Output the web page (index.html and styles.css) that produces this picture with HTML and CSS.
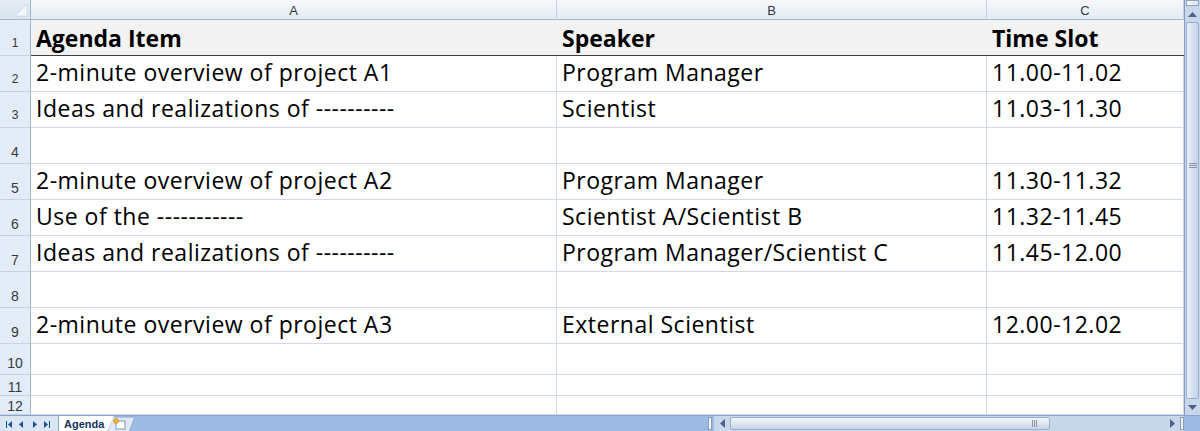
FILE: index.html
```html
<!DOCTYPE html>
<html>
<head>
<meta charset="utf-8">
<link rel="stylesheet" href="styles.css">
</head>
<body>
<div class="app">
  <div class="main">
    <div class="grid">
      <div class="corner">
        <svg width="30" height="19" viewBox="0 0 30 19"><polygon points="27,4 27,16 15,16" fill="#f4f7fb" stroke="#c3d0e2" stroke-width="0.6"/></svg>
      </div>
      <div class="colhead">A</div>
      <div class="colhead">B</div>
      <div class="colhead">C</div>

      <div class="rowhead">1</div>
      <div class="cell title">Agenda Item</div>
      <div class="cell title">Speaker</div>
      <div class="cell title">Time Slot</div>

      <div class="rowhead">2</div>
      <div class="cell">2-minute overview of project A1</div>
      <div class="cell">Program Manager</div>
      <div class="cell">11.00-11.02</div>

      <div class="rowhead">3</div>
      <div class="cell">Ideas and realizations of ----------</div>
      <div class="cell">Scientist</div>
      <div class="cell">11.03-11.30</div>

      <div class="rowhead big">4</div>
      <div class="cell"></div>
      <div class="cell"></div>
      <div class="cell"></div>

      <div class="rowhead big">5</div>
      <div class="cell">2-minute overview of project A2</div>
      <div class="cell">Program Manager</div>
      <div class="cell">11.30-11.32</div>

      <div class="rowhead big">6</div>
      <div class="cell">Use of the -----------</div>
      <div class="cell">Scientist A/Scientist B</div>
      <div class="cell">11.32-11.45</div>

      <div class="rowhead big">7</div>
      <div class="cell">Ideas and realizations of ----------</div>
      <div class="cell">Program Manager/Scientist C</div>
      <div class="cell">11.45-12.00</div>

      <div class="rowhead big">8</div>
      <div class="cell"></div>
      <div class="cell"></div>
      <div class="cell"></div>

      <div class="rowhead big">9</div>
      <div class="cell">2-minute overview of project A3</div>
      <div class="cell">External Scientist</div>
      <div class="cell">12.00-12.02</div>

      <div class="rowhead big">10</div>
      <div class="cell"></div>
      <div class="cell"></div>
      <div class="cell"></div>

      <div class="rowhead big short">11</div>
      <div class="cell"></div>
      <div class="cell"></div>
      <div class="cell"></div>

      <div class="rowhead big short">12</div>
      <div class="cell"></div>
      <div class="cell"></div>
      <div class="cell"></div>
    </div>

    <div class="vscroll">
      <div class="vsplit"></div>
      <div class="vbtn">
        <svg width="9" height="5" viewBox="0 0 9 5"><polygon points="0,5 9,5 4.5,0" fill="#4d6185"/></svg>
      </div>
      <div class="vthumb">
        <div class="vgrip"></div>
      </div>
      <div class="vbtn">
        <svg width="9" height="5" viewBox="0 0 9 5"><polygon points="0,0 9,0 4.5,5" fill="#4d6185"/></svg>
      </div>
    </div>
  </div>

  <div class="tabbar">
    <div class="tabnav">
      <svg width="56" height="14" viewBox="0 0 56 14">
        <g fill="#1e4f96">
          <rect x="6" y="4" width="1" height="7"/>
          <polygon points="12,4 12,11 8,7.5"/>
          <polygon points="23,4 23,11 19,7.5"/>
          <polygon points="33,4 33,11 37,7.5"/>
          <polygon points="44,4 44,11 48,7.5"/>
          <rect x="49" y="4" width="1" height="7"/>
        </g>
      </svg>
    </div>
    <div class="tab">Agenda</div>
    <div class="newtab">
      <svg width="28" height="16" viewBox="0 0 28 16">
        <polygon points="0,16 6,1 28,1 22,16" fill="#dfe8f4" stroke="#8ea8cc" stroke-width="1"/>
        <rect x="9" y="5" width="9" height="8" fill="#fff" stroke="#7f93b4" stroke-width="1"/>
        <circle cx="9" cy="5" r="2.6" fill="#f4b63c" stroke="#d08a1a" stroke-width="0.6"/>
      </svg>
    </div>
    <div class="tabfill"></div>
    <div class="hsplit"></div>
    <div class="hscroll">
      <div class="hbtn">
        <svg width="5" height="9" viewBox="0 0 5 9"><polygon points="5,0 5,9 0,4.5" fill="#4d6185"/></svg>
      </div>
      <div class="hthumb"><div class="hgrip"></div></div>
      <div class="htrack"></div>
      <div class="hbtn">
        <svg width="5" height="9" viewBox="0 0 5 9"><polygon points="0,0 0,9 5,4.5" fill="#4d6185"/></svg>
      </div>
      <div class="hsplit2"></div>
    </div>
    <div class="sizer"></div>
  </div>
</div>
</body>
</html>
```

FILE: styles.css
```css
* {
  box-sizing: border-box;
}

html, body {
  margin: 0;
  padding: 0;
  background: #ffffff;
}

.app {
  width: 1200px;
  height: 431px;
  overflow: hidden;
  display: flex;
  flex-direction: column;
  font-family: "Open Sans", "Lato", sans-serif;
}

.main {
  display: flex;
  height: 415px;
}

/* worksheet grid */
.grid {
  width: 1184px;
  display: grid;
  grid-template-columns: 31px 526px 430px 197px;
  grid-template-rows: 20px 36px repeat(8, 36px) 31px 21px 19px;
  overflow: hidden;
}

.corner {
  background: linear-gradient(#e6edf6, #d9e3ef);
  border-right: 1px solid #9eb6ce;
  border-bottom: 1px solid #9eb6ce;
}

.corner svg {
  display: block;
}

.colhead {
  background: linear-gradient(#f6f9fc, #e4ebf4);
  border-right: 1px solid #c5d2e3;
  border-bottom: 1px solid #9eb6ce;
  font-family: "Liberation Sans", "Arial", sans-serif;
  font-size: 13px;
  color: #333a45;
  display: flex;
  align-items: center;
  justify-content: center;
  padding-top: 1px;
}

.rowhead {
  background: #e4ecf7;
  border-right: 1px solid #9eb6ce;
  border-bottom: 1px solid #c5d2e3;
  font-family: "Liberation Sans", "Arial", sans-serif;
  font-size: 12px;
  color: #333a45;
  display: flex;
  align-items: flex-end;
  justify-content: center;
  padding-bottom: 5px;
}

.rowhead.big {
  font-size: 14px;
  padding-bottom: 3px;
}

.rowhead.short {
  padding-bottom: 0;
}

.cell {
  border-right: 1px solid #d0d7e5;
  border-bottom: 1px solid #d0d7e5;
  font-size: 23px;
  letter-spacing: 0.5px;
  color: #000;
  white-space: nowrap;
  display: flex;
  align-items: flex-end;
  padding: 0 0 5px 5px;
  line-height: 28px;
}

.cell.title {
  font-weight: bold;
  letter-spacing: 0;
  background: #f2f2f2;
  border-right: none;
  border-bottom: 1px solid #3f3f3f;
  padding-bottom: 3px;
}

/* vertical scrollbar */
.vscroll {
  width: 16px;
  display: flex;
  flex-direction: column;
  background: #c9d7ea;
  border-left: 1px solid #7f9bc6;
}

.vsplit {
  height: 6px;
  margin: 0 1px;
  background: linear-gradient(90deg, #f3f6fa, #dfe6ef);
  border: 1px solid #8ea3c1;
}

.vbtn {
  height: 16px;
  display: flex;
  align-items: center;
  justify-content: center;
}

.vthumb {
  flex: 1;
  margin: 0 1px;
  background: linear-gradient(90deg, #e9eff7, #d3dfee 55%, #c3d3e8);
  border: 1px solid #99aed0;
  border-radius: 2px;
  display: flex;
  align-items: center;
  justify-content: center;
  padding-bottom: 90px;
}

.vgrip {
  width: 8px;
  height: 5px;
  border-top: 1px solid #8a95a6;
  border-bottom: 1px solid #8a95a6;
  background: linear-gradient(#8a95a6, #8a95a6) center / 8px 1px no-repeat;
}

/* sheet tabs and horizontal scrollbar */
.tabbar {
  height: 16px;
  display: flex;
  background: #9ebbe3;
  border-top: 1px solid #8aa6cd;
}

.tabnav {
  width: 58px;
  background: #dbe6f4;
  display: flex;
  align-items: center;
}

.tabnav svg {
  display: block;
}

.tab {
  width: 56px;
  background: #ffffff;
  font-family: "Liberation Sans", "Arial", sans-serif;
  font-weight: bold;
  font-size: 11px;
  color: #15305e;
  display: flex;
  align-items: center;
  padding-left: 5px;
  clip-path: polygon(0 0, 100% 0, 88% 100%, 0 100%);
  border-left: 1px solid #8ea8cc;
}

.newtab {
  width: 28px;
  margin-left: -7px;
}

.newtab svg {
  display: block;
}

.tabfill {
  flex: 1;
}

.hsplit {
  width: 4px;
  margin: 1px 2px;
  background: #f6f8fb;
  border: 1px solid #8b9db8;
}

.hscroll {
  width: 470px;
  display: flex;
  background: #c9d7ea;
}

.hbtn {
  width: 16px;
  display: flex;
  align-items: center;
  justify-content: center;
}

.hthumb {
  width: 320px;
  margin: 1px 0;
  background: linear-gradient(#f2f5fa, #d9e3ef 60%, #c6d4e6);
  border: 1px solid #99aed0;
  border-radius: 2px;
  display: flex;
  align-items: center;
  justify-content: flex-end;
  padding-right: 12px;
}

.hgrip {
  width: 5px;
  height: 7px;
  border-left: 1px solid #8a95a6;
  border-right: 1px solid #8a95a6;
  background: linear-gradient(#8a95a6, #8a95a6) center / 1px 7px no-repeat;
}

.htrack {
  flex: 1;
}

.hsplit2 {
  width: 4px;
  margin: 1px 0;
  background: #f6f8fb;
  border: 1px solid #8b9db8;
}

.sizer {
  width: 16px;
  background: #9ebbe3;
}
```
